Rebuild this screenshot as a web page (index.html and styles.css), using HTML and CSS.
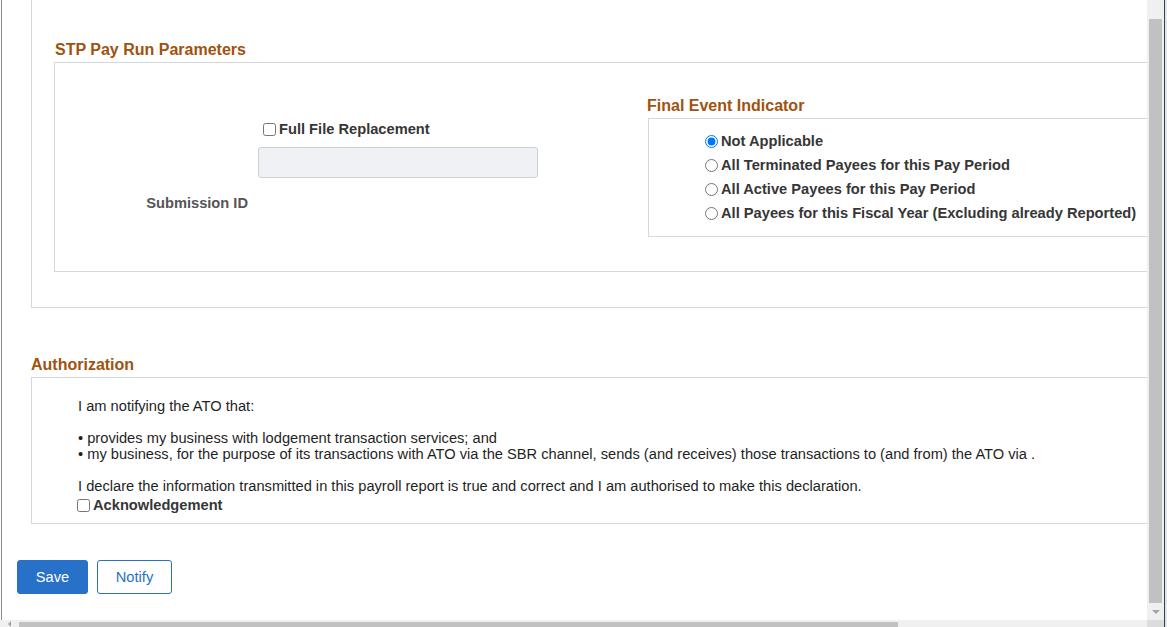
FILE: index.html
```html
<!DOCTYPE html>
<html lang="en">
<head>
<meta charset="utf-8">
<title>STP Pay Run</title>
<link rel="stylesheet" href="styles.css">
</head>
<body>
<div class="screen">
  <div class="window">
    <div class="main">
      <div class="edge"></div>
      <div class="viewport">
        <div class="page">
          <section class="outer">
            <h2 class="hdr">STP Pay Run Parameters</h2>
            <div class="box params">
              <div class="fields">
                <div class="cell"></div>
                <label class="chkrow"><input class="chk" type="checkbox">Full File Replacement</label>
                <div class="cell"></div>
                <input class="field" type="text" disabled>
                <div class="lbl">Submission ID</div>
                <div class="cell"></div>
              </div>
              <div class="fei">
                <h2 class="hdr">Final Event Indicator</h2>
                <div class="box radios">
                  <label class="radrow"><input class="rad" type="radio" name="fei" checked>Not Applicable</label>
                  <label class="radrow"><input class="rad" type="radio" name="fei">All Terminated Payees for this Pay Period</label>
                  <label class="radrow"><input class="rad" type="radio" name="fei">All Active Payees for this Pay Period</label>
                  <label class="radrow"><input class="rad" type="radio" name="fei">All Payees for this Fiscal Year (Excluding already Reported)</label>
                </div>
              </div>
            </div>
          </section>

          <section class="auth">
            <h2 class="hdr">Authorization</h2>
            <div class="box authbox">
              <div class="authtext">I am notifying the ATO that:<br><br>&bull; provides my business with lodgement transaction services; and<br>&bull; my business, for the purpose of its transactions with ATO via the SBR channel, sends (and receives) those transactions to (and from) the ATO via .<br><br>I declare the information transmitted in this payroll report is true and correct and I am authorised to make this declaration.</div>
              <label class="chkrow ack"><input class="chk" type="checkbox">Acknowledgement</label>
            </div>
          </section>

          <div class="actions">
            <button class="btn primary" type="button">Save</button>
            <button class="btn secondary" type="button">Notify</button>
          </div>
        </div>
      </div>
      <div class="vscroll">
        <div class="vthumb"></div>
        <div class="varrow"><span class="tri-down"></span></div>
      </div>
    </div>
    <div class="hscroll">
      <div class="htrack">
        <div class="harrow"><span class="tri-left"></span></div>
        <div class="hthumb"></div>
      </div>
      <div class="corner"></div>
    </div>
  </div>
  <div class="strip"></div>
</div>
</body>
</html>
```

FILE: styles.css
```css
html, body {
  margin: 0;
  padding: 0;
  background: #ffffff;
  overflow: hidden;
}

.screen {
  width: 1167px;
  height: 627px;
  display: flex;
  overflow: hidden;
  font-family: "Liberation Sans", Arial, sans-serif;
  font-size: 14.67px;
  color: #333333;
}

.window {
  width: 1164px;
  display: flex;
  flex-direction: column;
}

.main {
  height: 620px;
  display: flex;
}

.edge {
  width: 1px;
  margin-left: 1px;
  background: #8a8a8a;
}

.viewport {
  flex: 1;
  overflow: hidden;
  background: #ffffff;
}

.page {
  width: 1400px;
}

.hdr {
  margin: 0 0 2px 0;
  font-size: 16px;
  line-height: 20px;
  font-weight: bold;
  color: #a0520f;
}

.box {
  border: 1px solid #d5d8dd;
}

/* Outer group (top border scrolled out of view) */
.outer {
  margin-left: 29px;
  padding: 40px 0 35px 22px;
  border: 1px solid #d5d8dd;
  border-top: 0;
}

.outer > .hdr {
  padding-left: 1px;
}

.params {
  display: flex;
  align-items: flex-start;
  padding: 33px 0 34px 0;
}

.fields {
  display: grid;
  grid-template-columns: 193px 280px;
  column-gap: 10px;
  padding-top: 24px;
}

.chkrow {
  display: flex;
  align-items: center;
  height: 18px;
  font-weight: bold;
  color: #363636;
}

.chk {
  width: 13px;
  height: 13px;
  margin: 0 3px 0 5px;
}

.field {
  box-sizing: border-box;
  width: 280px;
  height: 31px;
  margin: 9px 0 0 0;
  padding: 0 6px;
  border: 1px solid #cdd1d7;
  border-radius: 3px;
  background: #f0f1f4;
  font: inherit;
}

.lbl {
  margin-top: 16px;
  line-height: 18px;
  text-align: right;
  font-weight: bold;
  color: #555555;
}

.fei {
  flex: 1;
  margin-left: 110px;
}

.fei > .hdr {
  margin-left: -1px;
}

.radios {
  padding: 10px 0 11px 51px;
  border-right: 0;
}

.radrow {
  display: flex;
  align-items: center;
  height: 24px;
  font-weight: bold;
  color: #363636;
}

.rad {
  width: 13px;
  height: 13px;
  margin: 0 3px 0 5px;
}

/* Authorization */
.auth {
  margin: 47px 0 0 29px;
}

.authbox {
  padding: 20px 0 9px 46px;
}

.authtext {
  line-height: 16px;
  color: #1f1f1f;
}

.ack {
  margin-top: 2px;
}

.ack .chk {
  margin-left: -1px;
}

/* Buttons */
.actions {
  display: flex;
  gap: 9px;
  margin: 36px 0 0 15px;
}

.btn {
  box-sizing: border-box;
  height: 34px;
  padding: 0;
  border-radius: 3px;
  font-family: "Liberation Sans", Arial, sans-serif;
  font-size: 14.67px;
  cursor: pointer;
}

.primary {
  width: 71px;
  border: 1px solid #2871c8;
  background: #2871c8;
  color: #ffffff;
}

.secondary {
  width: 75px;
  border: 1px solid #2871c8;
  background: #ffffff;
  color: #2871c8;
}

/* Scrollbars */
.vscroll {
  width: 17px;
  background: #f0f0f0;
  display: flex;
  flex-direction: column;
  align-items: center;
}

.vthumb {
  width: 13px;
  height: 584px;
  margin-top: 19px;
  background: #c1c1c1;
}

.varrow {
  flex: 1;
  display: flex;
  align-items: center;
  justify-content: center;
}

.tri-down {
  width: 0;
  height: 0;
  border-left: 4px solid transparent;
  border-right: 4px solid transparent;
  border-top: 4px solid #a3a3a3;
}

.hscroll {
  height: 7px;
  display: flex;
}

.htrack {
  flex: 1;
  display: flex;
  background: #f0f0f0;
}

.harrow {
  width: 19px;
  display: flex;
  align-items: flex-end;
  justify-content: center;
}

.tri-left {
  width: 0;
  height: 0;
  border-top: 3px solid transparent;
  border-bottom: 3px solid transparent;
  border-right: 3px solid #a3a3a3;
}

.hthumb {
  width: 879px;
  margin-top: 2px;
  background: #c1c1c1;
}

.corner {
  width: 17px;
  background: #dcdcdc;
}

.strip {
  width: 3px;
  border-left: 1px solid #3f3f3f;
  background: #dfe4ea;
}
```
